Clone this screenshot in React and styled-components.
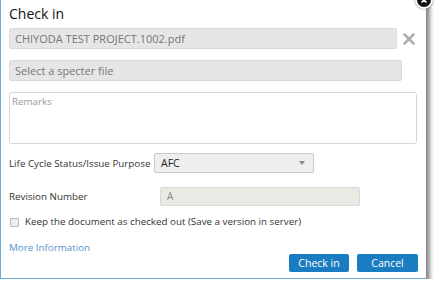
import React from 'react'
import styled, { createGlobalStyle } from 'styled-components'

const GlobalStyle = createGlobalStyle`
    html, body {
        margin: 0;
        padding: 0;
        background: #ffffff;
        font-family: "Open Sans", "Liberation Sans", sans-serif;
        overflow: hidden;
    }
`

const Dialog = styled.div`
    position: relative;
    box-sizing: border-box;
    width: 427px;
    margin-top: -5px;
    padding: 8px 8px 6px 8px;
    background: #fff;
    border: 1px solid #6aaedb;
    border-right-color: #8a8a8a;
    box-shadow: 3px 4px 4px rgba(0, 0, 0, 0.45);
    display: flex;
    flex-direction: column;
`

const CloseBadge = styled.div`
    position: absolute;
    top: -5px;
    right: -7px;
    width: 14px;
    height: 14px;
    border-radius: 50%;
    background: #111;
    border: 2px solid #fff;
    box-shadow: 0 0 2px rgba(0, 0, 0, 0.6);
    display: flex;
    align-items: center;
    justify-content: center;
`

const Title = styled.h1`
    margin: 0;
    font-size: 14px;
    font-weight: 400;
    line-height: 20px;
    color: #111;
`

const FieldRow = styled.div`
    display: flex;
    align-items: center;
    margin-top: ${p => p.$top || 0}px;
`

const GrayField = styled.div`
    box-sizing: border-box;
    width: 393px;
    height: 21px;
    padding: 0 5px;
    background: #e6e6e6;
    border: 1px solid #dadada;
    border-radius: 2px;
    color: #777;
    font-size: 11px;
    line-height: 19px;
`

const RemoveIcon = styled.div`
    width: 18px;
    margin-left: 3px;
    display: flex;
    justify-content: center;
`

const Remarks = styled.div`
    box-sizing: border-box;
    width: 408px;
    height: 52px;
    margin-top: 11px;
    padding: 2px 2px;
    border: 1px solid #d8d8d8;
    border-radius: 3px;
    color: #999;
    font-size: 9.8px;
    line-height: 13px;
`

const FormRow = styled.div`
    display: flex;
    align-items: center;
    margin-top: ${p => p.$top}px;
`

const Label = styled.div`
    width: ${p => p.$width}px;
    white-space: nowrap;
    color: #333;
    font-size: 9.8px;
`

const Select = styled.div`
    box-sizing: border-box;
    width: 160px;
    height: 20px;
    padding: 0 8px 0 6px;
    display: flex;
    align-items: center;
    justify-content: space-between;
    background: #eeeeee;
    border: 1px solid #c9c9c9;
    border-radius: 2px;
    color: #222;
    font-size: 10.5px;
`

const Caret = styled.span`
    width: 0;
    height: 0;
    border-left: 3.5px solid transparent;
    border-right: 3.5px solid transparent;
    border-top: 4px solid #888;
`

const ReadOnlyInput = styled.div`
    box-sizing: border-box;
    width: 200px;
    height: 19px;
    padding: 0 6px;
    background: #eaeae5;
    border: 1px solid #dcdcd6;
    border-radius: 2px;
    color: #888;
    font-size: 10px;
    line-height: 17px;
`

const CheckRow = styled.label`
    display: flex;
    align-items: center;
    margin-top: 10px;
    margin-left: 1px;
    white-space: nowrap;
    color: #333;
    font-size: 9.8px;
    line-height: 12px;
`

const Box = styled.span`
    box-sizing: border-box;
    width: 9px;
    height: 9px;
    margin-right: 6px;
    background: #eee;
    border: 1px solid #b8b8b8;
    border-radius: 1px;
`

const MoreLink = styled.a`
    margin-top: 14px;
    color: #5a8fca;
    font-size: 9.8px;
    line-height: 12px;
    text-decoration: none;
`

const Footer = styled.div`
    display: flex;
    justify-content: flex-end;
    gap: 8px;
    margin-top: 0;
`

const Button = styled.button`
    width: ${p => p.$width}px;
    height: 18px;
    padding: 0;
    border: none;
    border-radius: 2px;
    background: #1b7dc1;
    color: #fff;
    font-family: inherit;
    font-size: 10.5px;
`

export default function App() {
    return (
        <>
            <GlobalStyle />
            <Dialog>
                <CloseBadge>
                    <svg width="8" height="8" viewBox="0 0 8 8">
                        <path d="M1.5 1.5 L6.5 6.5 M6.5 1.5 L1.5 6.5" stroke="#fff" strokeWidth="1.6" />
                    </svg>
                </CloseBadge>
                <Title>Check in</Title>

                <FieldRow $top={4}>
                    <GrayField>CHIYODA TEST PROJECT.1002.pdf</GrayField>
                    <RemoveIcon>
                        <svg width="12" height="12" viewBox="0 0 12 12">
                            <path d="M1.5 1.5 L10.5 10.5 M10.5 1.5 L1.5 10.5" stroke="#b0b0b0" strokeWidth="2.6" strokeLinecap="round" />
                        </svg>
                    </RemoveIcon>
                </FieldRow>

                <FieldRow $top={11}>
                    <GrayField>Select a specter file</GrayField>
                </FieldRow>

                <Remarks>Remarks</Remarks>

                <FormRow $top={9}>
                    <Label $width={145}>Life Cycle Status/Issue Purpose</Label>
                    <Select>
                        <span>AFC</span>
                        <Caret />
                    </Select>
                </FormRow>

                <FormRow $top={14}>
                    <Label $width={151}>Revision Number</Label>
                    <ReadOnlyInput>A</ReadOnlyInput>
                </FormRow>

                <CheckRow>
                    <Box />
                    Keep the document as checked out (Save a version in server)
                </CheckRow>

                <MoreLink href="#">More Information</MoreLink>

                <Footer>
                    <Button $width={60}>Check in</Button>
                    <Button $width={61}>Cancel</Button>
                </Footer>
            </Dialog>
        </>
    )
}
